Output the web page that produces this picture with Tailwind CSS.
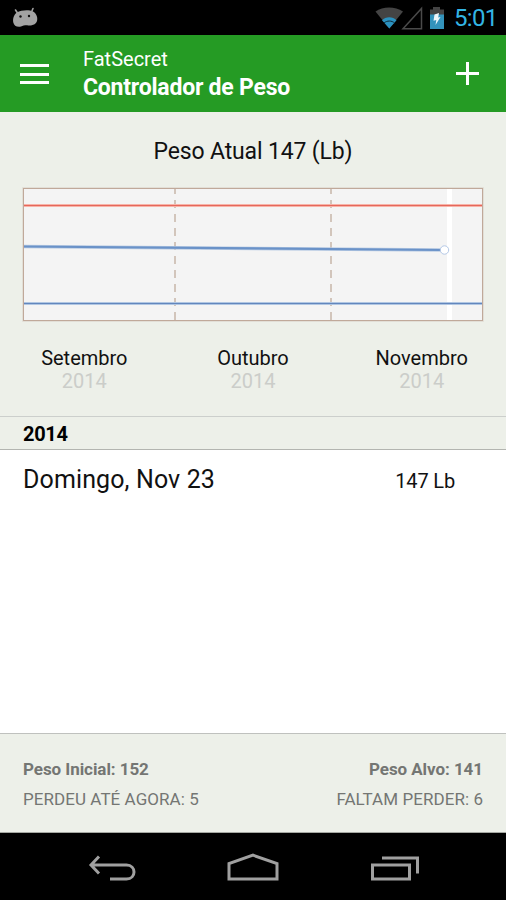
<!DOCTYPE html>
<html lang="pt">
<head>
    <meta charset="UTF-8">
    <meta name="viewport" content="width=device-width, initial-scale=1.0">
    <title>Controlador de Peso</title>
    <script src="https://cdn.jsdelivr.net/npm/@tailwindcss/browser@4"></script>
</head>
<body class="bg-black font-['Roboto',sans-serif] text-[#111]">
    <div class="w-[506px] h-[900px] flex flex-col overflow-hidden">

        <!-- Status bar -->
        <div class="h-[35px] shrink-0 bg-black flex items-center justify-between pl-[12px] pr-[10px]">
            <svg class="w-[27px] h-[21px]" viewBox="0 0 27 21" fill="none">
                <path d="M3.500 3L5.500 6M21 1.500L19.500 5" stroke="#a3a3a3" stroke-width="1.600" stroke-linecap="round"/>
                <path d="M5 5.500C9 3 17 2.500 21 4.500C24.500 6.500 26 10.500 25 14C24 17.500 20 18.800 16 18.400C13 18.200 11 18.800 9 19.600C5 20.500 2 18.800 1.300 15.500C.6 11.500 2 7.500 5 5.500Z" fill="#a3a3a3"/>
                <circle cx="8.500" cy="9.500" r="1.200" fill="#111"/>
                <circle cx="17" cy="9" r="1.200" fill="#111"/>
            </svg>
            <div class="flex items-center">
                <svg class="w-[70px] h-[24px]" viewBox="0 0 70 24" fill="none">
                    <path d="M.5 5.500C8 .2 20 .2 28 5.500L14.300 22.500Z" fill="#444"/>
                    <path d="M7 14.300C10.500 10.300 18 10.300 21.500 14.300L14.300 22.500Z" fill="#2b91bf"/>
                    <path d="M9 17C12 14.400 16.600 14.400 19.600 17" stroke="#0d2a38" stroke-width="1"/>
                    <path d="M28 22.800H46.500V2.500Z" stroke="#4a4a4a" stroke-width="1.500"/>
                    <path d="M55 3.500H58V1H65V3.500H69V9H55Z" fill="#444"/>
                    <path d="M55 8.500H69V23H55Z" fill="#3393bb"/>
                    <path d="M59.500 8.500L64 7L63.200 11.500L65.500 11L60.500 19L61.300 14L58.500 14.700Z" fill="#eef6fa"/>
                </svg>
                <span class="ml-[9px] text-[24px] leading-none text-[#33b5e5] w-[42px] whitespace-nowrap tracking-[-0.7px]">5:01</span>
            </div>
        </div>

        <!-- App bar -->
        <header class="h-[77px] shrink-0 bg-[#259b24] text-white flex items-center pl-[20px] pr-[27px]">
            <div class="w-[29px] flex flex-col gap-[5.5px] pt-[1px]">
                <div class="h-[3px] bg-white"></div>
                <div class="h-[3px] bg-white"></div>
                <div class="h-[3px] bg-white"></div>
            </div>
            <div class="ml-[34px] flex-1 whitespace-nowrap pt-[1px]">
                <p class="text-[20px] leading-[27px]">FatSecret</p>
                <h1 class="text-[23px] leading-[29px] font-bold tracking-[-0.22px]">Controlador de Peso</h1>
            </div>
            <svg class="w-[23px] h-[23px]" viewBox="0 0 23 23"><path d="M10 0H13V10H23V13H13V23H10V13H0V10H10Z" fill="#fff"/></svg>
        </header>

        <!-- Weight chart -->
        <section class="h-[304px] shrink-0 bg-[#edf0e9] px-[23px]">
            <h2 class="h-[76px] pt-[4px] flex items-center justify-center text-[23px] tracking-[-0.15px] whitespace-nowrap">Peso Atual 147 (Lb)</h2>
            <svg class="w-[460px] h-[133px] overflow-visible" viewBox="0 0 460 133" fill="none">
                <rect width="460" height="133" fill="#f4f4f4"/>
                <rect x="424" width="5" height="133" fill="#fff"/>
                <path d="M152 0V133M308 0V133" stroke="#d2c5bb" stroke-width="2" stroke-dasharray="8 6" stroke-dashoffset="2"/>
                <path d="M0 17.500H460" stroke="#f7b3a8" stroke-width="3"/>
                <path d="M0 17.500H460" stroke="#e5675b" stroke-width="1"/>
                <path d="M0 115.500H460" stroke="#b0c6e2" stroke-width="3"/>
                <path d="M0 115.500H460" stroke="#6286bd" stroke-width="1"/>
                <path d="M0 58.500L419 62" stroke="#b7cae3" stroke-width="3.600"/>
                <path d="M0 58.500L419 62" stroke="#6a92c8" stroke-width="2.200"/>
                <circle cx="421.500" cy="62" r="4.200" fill="#fff" stroke="#b4c8e6"/>
                <rect x="0" y="0" width="460" height="133" stroke="#c0a99a" stroke-opacity=".3" stroke-width="1.500"/>
                <rect x=".5" y=".5" width="459" height="132" stroke="#c0a99a"/>
            </svg>
            <div class="mt-[26px] -mx-[23px] grid grid-cols-3 text-center text-[20px] leading-[23px]">
                <div>Setembro<p class="text-[#cbcdc9]">2014</p></div>
                <div>Outubro<p class="text-[#cbcdc9]">2014</p></div>
                <div>Novembro<p class="text-[#cbcdc9]">2014</p></div>
            </div>
        </section>

        <div class="h-[34px] shrink-0 bg-[#edf0e9] border-y border-t-[#cccfcc] border-b-[#b3b5b0] px-[23px] pt-[2px] flex items-center text-[20px] tracking-[-0.3px] font-bold text-black">2014</div>

        <!-- Entries -->
        <main class="h-[283px] shrink-0 bg-white pl-[23px] pr-[51px]">
            <div class="h-[60px] flex items-center justify-between whitespace-nowrap">
                <span class="text-[25px] tracking-[0.12px]">Domingo, Nov 23</span>
                <span class="text-[20px] pt-[2px] tracking-[-0.15px]">147 Lb</span>
            </div>
        </main>

        <!-- Summary -->
        <footer class="h-[100px] shrink-0 bg-[#edf0e9] border-y border-t-[#bfc1be] border-b-[#a5a8a2] px-[23px] pt-[20px] text-[#747673] text-[17px] leading-[30px] whitespace-nowrap">
            <div class="flex justify-between font-bold tracking-[-0.06px]"><span>Peso Inicial: 152</span><span>Peso Alvo: 141</span></div>
            <div class="flex justify-between tracking-[0.06px]"><span>PERDEU ATÉ AGORA: 5</span><span>FALTAM PERDER: 6</span></div>
        </footer>

        <!-- Navigation bar -->
        <nav class="h-[67px] shrink-0 bg-black">
            <svg class="w-[506px] h-[67px]" viewBox="0 0 506 67" fill="none" stroke="#a0a0a0" stroke-width="3">
                <path d="M99 23.500L91 32L99 40.500M91 32H126.500C136.500 32 136.500 46 126.500 46H110"/>
                <path d="M229 46V30.500L253 22.200L277 30.500V46Z"/>
                <path d="M372.500 32H409.500V46H372.500Z"/>
                <path d="M382 25H417.500V40.500"/>
            </svg>
        </nav>
    </div>
</body>
</html>
